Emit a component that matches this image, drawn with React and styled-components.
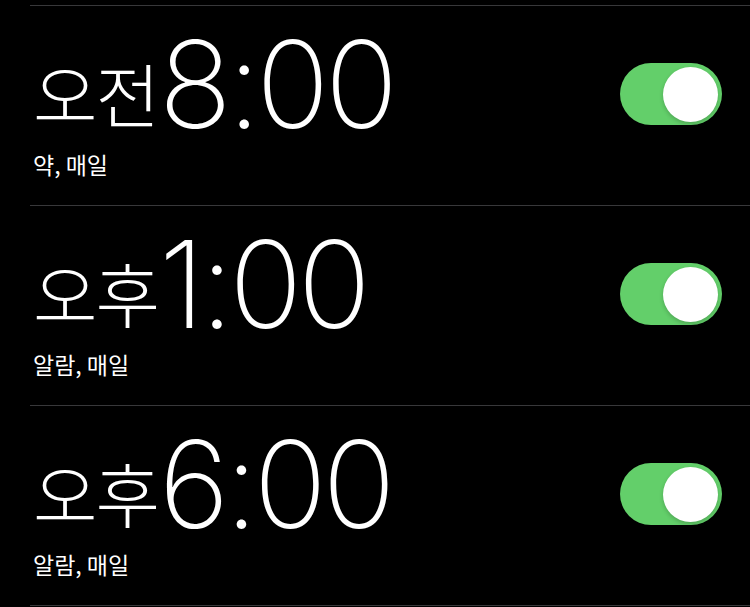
import React from "react";
import styled, { createGlobalStyle } from "styled-components";

const Global = createGlobalStyle`
  html, body { margin: 0; padding: 0; background: #000; }
  body { width: 750px; height: 607px; overflow: hidden; }
`;

const Page = styled.div`
  background: #000;
  width: 750px;
  height: 607px;
  padding-top: 5px;
  box-sizing: border-box;
  padding-left: 30px;
  overflow: hidden;
`;

const Row = styled.div`
  border-top: 1px solid #38383a;
  height: 200px;
  box-sizing: border-box;
  display: flex;
  justify-content: space-between;
  align-items: flex-start;
  padding-left: 3px;
  padding-right: 28px;
`;

const EndRule = styled.div`
  border-top: 1px solid #38383a;
`;

const Left = styled.div`
  display: flex;
  flex-direction: column;
`;

const TimeLine = styled.div`
  display: flex;
  align-items: baseline;
  color: #fff;
  height: 128px;
  box-sizing: border-box;
  padding-top: 18px;
  line-height: 1;
`;

const Period = styled.span`
  font-family: "Noto Sans CJK KR", sans-serif;
  font-weight: 300;
  font-size: 70px;
  letter-spacing: -2px;
  transform: translateY(-5px);
`;

const Clock = styled.span`
  font-family: "Inter", sans-serif;
  font-weight: 200;
  font-size: 121px;
  letter-spacing: -4.5px;
  margin-left: 1px;
`;

const Label = styled.div`
  color: #fff;
  font-family: "Noto Sans CJK KR", sans-serif;
  font-size: 23px;
  font-weight: 400;
  margin-top: 13px;
`;

const Switch = styled.div`
  width: 102px;
  height: 62px;
  border-radius: 31px;
  background: #63cf6a;
  margin-top: 57px;
  display: flex;
  align-items: center;
  justify-content: flex-end;
  padding-right: 4px;
  box-sizing: border-box;
`;

const Knob = styled.div`
  width: 55px;
  height: 55px;
  border-radius: 50%;
  background: #fff;
  box-shadow: 0 2px 4px rgba(0, 0, 0, 0.2);
`;

const alarms = [
  { period: "오전", time: "8:00", label: "약, 매일" },
  { period: "오후", time: "1:00", label: "알람, 매일" },
  { period: "오후", time: "6:00", label: "알람, 매일" },
];

export default function App() {
  return (
    <>
      <Global />
      <Page>
        {alarms.map((a, i) => (
          <Row key={i}>
            <Left>
              <TimeLine>
                <Period>{a.period}</Period>
                <Clock>{a.time}</Clock>
              </TimeLine>
              <Label>{a.label}</Label>
            </Left>
            <Switch>
              <Knob />
            </Switch>
          </Row>
        ))}
        <EndRule />
      </Page>
    </>
  );
}
